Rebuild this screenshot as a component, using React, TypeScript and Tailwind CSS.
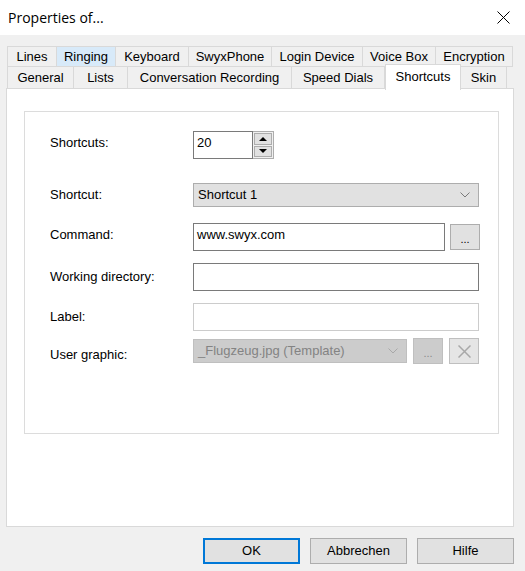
import React from "react";

const row1 = [
  { label: "Lines", w: "w-[50px]" },
  { label: "Ringing", w: "w-[59px]", hover: true },
  { label: "Keyboard", w: "w-[73px]" },
  { label: "SwyxPhone", w: "w-[83px]" },
  { label: "Login Device", w: "w-[91px]" },
  { label: "Voice Box", w: "w-[73px]" },
  { label: "Encryption", w: "w-[77px]" },
];

const row2 = [
  { label: "General", w: "w-[67px]" },
  { label: "Lists", w: "w-[54px]" },
  { label: "Conversation Recording", w: "w-[164px]" },
  { label: "Speed Dials", w: "w-[93px]" },
  { label: "Shortcuts", w: "w-[76px]", active: true },
  { label: "Skin", w: "w-[46px]" },
];

function Chevron({ color = "#7a7a7a" }: { color?: string }) {
  return (
    <svg width="10" height="6" viewBox="0 0 10 6" className="shrink-0">
      <path d="M0.5 0.5 L5 5 L9.5 0.5" fill="none" stroke={color} strokeWidth="1" />
    </svg>
  );
}

function Label({ children, className = "" }: { children: React.ReactNode; className?: string }) {
  return <div className={`w-[143px] shrink-0 ${className}`}>{children}</div>;
}

export default function App() {
  return (
    <div className="w-[525px] h-[571px] bg-[#f0f0f0] text-[13px] text-black flex flex-col font-['Liberation_Sans',Arial,sans-serif] overflow-hidden">
      {/* TITLE BAR */}
      <div className="h-[35px] bg-white flex items-center justify-between pl-[8px] pr-[15px] shrink-0">
        <span className="text-[14px] font-['Open_Sans',sans-serif] text-black">Properties of...</span>
        <svg width="13" height="13" viewBox="0 0 13 13">
          <path d="M0.5 0.5 L12.5 12.5 M12.5 0.5 L0.5 12.5" stroke="#000" strokeWidth="1" />
        </svg>
      </div>

      {/* TABS */}
      <div className="pl-[7px] pt-[11px] flex flex-col">
        <div className="flex h-[20px]">
          {row1.map((t, i) => (
            <div
              key={t.label}
              className={`${t.w} flex items-center justify-center border-t border-r border-[#d9d9d9] ${i === 0 ? "border-l" : ""} ${t.hover ? "bg-[#d8eaf9]" : "bg-[#f0f0f0]"}`}
            >
              {t.label}
            </div>
          ))}
        </div>
        <div className="flex h-[22px] border-t border-[#d9d9d9] w-[506px] relative">
          {row2.map((t, i) =>
            t.active ? (
              <div
                key={t.label}
                className={`${t.w} relative z-10 -mt-[3px] h-[26px] bg-white border-x border-t border-[#d9d9d9] flex items-start justify-center pt-[2px]`}
              >
                {t.label}
              </div>
            ) : (
              <div
                key={t.label}
                className={`${t.w} flex items-center justify-center border-r border-[#d9d9d9] ${i === 0 ? "border-l" : ""} bg-[#f0f0f0] pt-[1px]`}
              >
                {t.label}
              </div>
            )
          )}
        </div>
      </div>

      {/* PANEL */}
      <div className="ml-[6px] w-[508px] h-[439px] bg-white border border-[#d9d9d9] pt-[22px] pl-[17px] shrink-0">
        <div className="w-[475px] h-[323px] border border-[#dcdcdc] pl-[25px] pt-[19px]">
          {/* Shortcuts spin */}
          <div className="flex items-center h-[28px]">
            <Label className="-mt-[4px]">Shortcuts:</Label>
            <div className="flex h-[28px]">
              <div className="w-[60px] h-[28px] border border-[#7a7a7a] bg-white pl-[3px] pt-[3px] leading-[15px]">20</div>
              <div className="w-[21px] h-[28px] border border-[#adadad] border-l-0 bg-[#f0f0f0] flex flex-col p-[1px] gap-[1px]">
                <div className="flex-1 bg-[#e1e1e1] border border-[#adadad] flex items-center justify-center">
                  <svg width="8" height="4" viewBox="0 0 8 4"><path d="M0 4 L4 0 L8 4 Z" fill="#000" /></svg>
                </div>
                <div className="flex-1 bg-[#e1e1e1] border border-[#adadad] flex items-center justify-center">
                  <svg width="8" height="4" viewBox="0 0 8 4"><path d="M0 0 L4 4 L8 0 Z" fill="#000" /></svg>
                </div>
              </div>
            </div>
          </div>

          {/* Shortcut combo */}
          <div className="flex items-center h-[24px] mt-[24px]">
            <Label>Shortcut:</Label>
            <div className="w-[286px] h-[24px] bg-[#e1e1e1] border border-[#adadad] flex items-center justify-between pl-[4px] pr-[8px]">
              <span>Shortcut 1</span>
              <Chevron />
            </div>
          </div>

          {/* Command */}
          <div className="flex items-center h-[28px] mt-[16px]">
            <Label className="-mt-[4px]">Command:</Label>
            <div className="w-[252px] h-[28px] border border-[#7a7a7a] bg-white pl-[3px] pt-[3px] leading-[15px]">www.swyx.com</div>
            <div className="ml-[5px] w-[30px] h-[26px] bg-[#e1e1e1] border border-[#adadad] flex items-center justify-center text-[11px] leading-none pt-[4px]">...</div>
          </div>

          {/* Working directory */}
          <div className="flex items-center h-[28px] mt-[12px]">
            <Label>Working directory:</Label>
            <div className="w-[286px] h-[28px] border border-[#7a7a7a] bg-white" />
          </div>

          {/* Label */}
          <div className="flex items-center h-[28px] mt-[12px]">
            <Label>Label:</Label>
            <div className="w-[286px] h-[28px] border border-[#cccccc] bg-white" />
          </div>

          {/* User graphic */}
          <div className="flex items-center h-[26px] mt-[7px]">
            <Label className="mt-[8px]">User graphic:</Label>
            <div className="w-[214px] h-[24px] bg-[#cccccc] border border-[#bfbfbf] flex items-center justify-between pl-[4px] pr-[8px] text-[#838383]">
              <span>_Flugzeug.jpg (Template)</span>
              <Chevron color="#a8a8a8" />
            </div>
            <div className="ml-[6px] w-[30px] h-[26px] bg-[#cccccc] border border-[#bfbfbf] flex items-center justify-center text-[11px] leading-none pt-[4px] text-[#8a8a8a]">...</div>
            <div className="ml-[6px] w-[30px] h-[26px] bg-[#e5e5e5] border border-[#bfbfbf] flex items-center justify-center">
              <svg width="13" height="13" viewBox="0 0 13 13">
                <path d="M0.5 0.5 L12.5 12.5 M12.5 0.5 L0.5 12.5" stroke="#a8a8a8" strokeWidth="1.5" />
              </svg>
            </div>
          </div>
        </div>
      </div>

      {/* BUTTONS */}
      <div className="flex justify-end gap-[10px] pr-[11px] mt-[11px]">
        <button className="w-[97px] h-[26px] bg-[#e1e1e1] border-2 border-[#0078d7]">OK</button>
        <button className="w-[97px] h-[26px] bg-[#e1e1e1] border border-[#adadad]">Abbrechen</button>
        <button className="w-[97px] h-[26px] bg-[#e1e1e1] border border-[#adadad]">Hilfe</button>
      </div>
    </div>
  );
}
